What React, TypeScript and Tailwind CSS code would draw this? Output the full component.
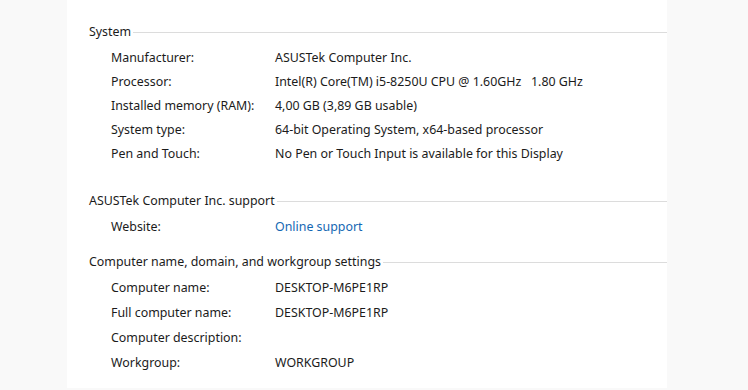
import React from 'react';

type Row = { label: string; value?: string; link?: boolean };

const sections: { title: string; rows: Row[]; className: string; rowClass: string }[] = [
  {
    title: 'System',
    className: 'pt-[20px]',
    rowClass: 'h-6',
    rows: [
      { label: 'Manufacturer:', value: 'ASUSTek Computer Inc.' },
      { label: 'Processor:', value: 'Intel(R) Core(TM) i5-8250U CPU @ 1.60GHz   1.80 GHz' },
      { label: 'Installed memory (RAM):', value: '4,00 GB (3,89 GB usable)' },
      { label: 'System type:', value: '64-bit Operating System, x64-based processor' },
      { label: 'Pen and Touch:', value: 'No Pen or Touch Input is available for this Display' },
    ],
  },
  {
    title: 'ASUSTek Computer Inc. support',
    className: 'pt-[23px]',
    rowClass: 'h-6',
    rows: [{ label: 'Website:', value: 'Online support', link: true }],
  },
  {
    title: 'Computer name, domain, and workgroup settings',
    className: 'pt-[11px]',
    rowClass: 'h-[25px]',
    rows: [
      { label: 'Computer name:', value: 'DESKTOP-M6PE1RP' },
      { label: 'Full computer name:', value: 'DESKTOP-M6PE1RP' },
      { label: 'Computer description:' },
      { label: 'Workgroup:', value: 'WORKGROUP' },
    ],
  },
];

const App: React.FC = () => {
  return (
    <div
      className="h-[390px] w-[748px] bg-[#f9f9f9] pl-[67px] text-[12.4px] text-[#1b1b1b]"
      style={{ fontFamily: '"Noto Sans", "Open Sans", sans-serif' }}
    >
      <div className="h-[388px] w-[600px] bg-white">
        {sections.map((section) => (
          <div key={section.title} className={section.className}>
            {/* section header with rule */}
            <div className="flex h-6 items-center pl-[22px]">
              <span className="whitespace-nowrap pr-[2px]">{section.title}</span>
              <div className="h-px flex-1 bg-[#dcdcdc]" />
            </div>
            <div className="pt-[2px]">
              {section.rows.map((row) => (
                <div key={row.label} className={`flex items-center pl-[44px] ${section.rowClass}`}>
                  <div className="w-[164px] shrink-0">{row.label}</div>
                  <div className={row.link ? 'whitespace-pre text-[#1467b3]' : 'whitespace-pre'}>
                    {row.value}
                  </div>
                </div>
              ))}
            </div>
          </div>
        ))}
      </div>
    </div>
  );
};

export default App;
